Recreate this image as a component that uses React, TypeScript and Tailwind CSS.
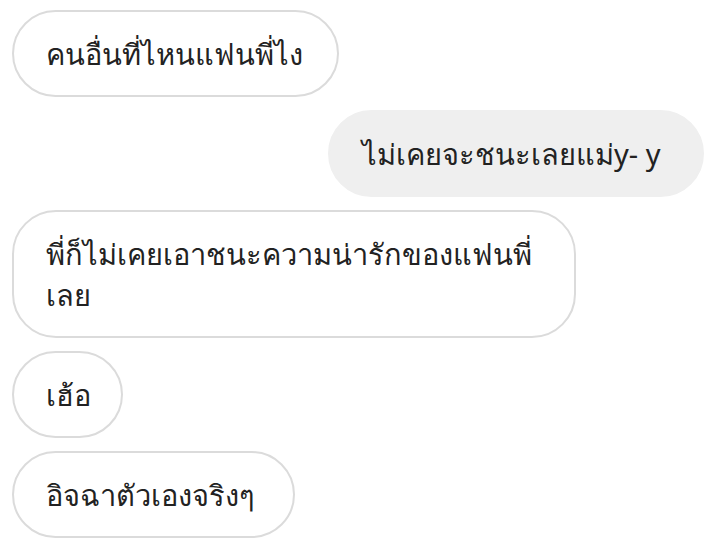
const messages: { lines: string[]; mine?: boolean; width: string }[] = [
  { lines: ["คนอื่นที่ไหนแฟนพี่ไง"], width: "w-[327px]" },
  { lines: ["ไม่เคยจะชนะเลยแม่y- y"], mine: true, width: "w-[376px]" },
  { lines: ["พี่ก็ไม่เคยเอาชนะความน่ารักของแฟนพี่", "เลย"], width: "w-[564px]" },
  { lines: ["เฮ้อ"], width: "w-[111px]" },
  { lines: ["อิจฉาตัวเองจริงๆ"], width: "w-[283px]" },
];

export default function App() {
  return (
    <div
      className="w-[727px] h-[546px] bg-white overflow-hidden px-3 pt-[10px] flex flex-col gap-[13px]"
      style={{ fontFamily: '"Noto Sans", "DejaVu Sans", sans-serif' }}
    >
      {messages.map((m, i) => (
        <div key={i} className={`flex ${m.mine ? "justify-end pr-[11px]" : "justify-start"}`}>
          <div
            className={`${m.width} rounded-[44px] border-2 px-8 py-[21px] text-[29px] leading-[41px] text-[#222222] whitespace-nowrap ${
              m.mine ? "bg-[#efefef] border-[#efefef]" : "bg-white border-[#dbdbdb]"
            }`}
          >
            {m.lines.map((l, j) => (
              <div key={j}>{l}</div>
            ))}
          </div>
        </div>
      ))}
    </div>
  );
}
